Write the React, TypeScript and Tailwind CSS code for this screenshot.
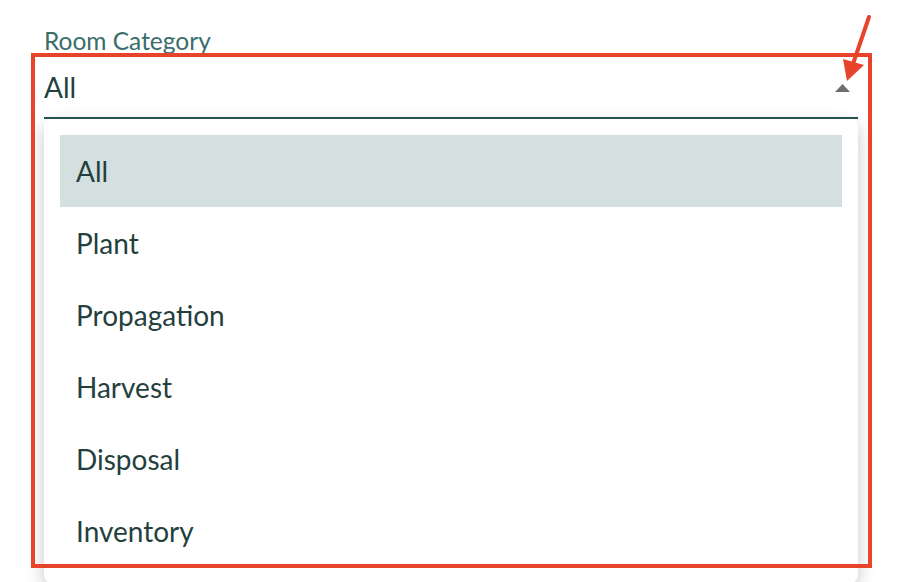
import React from 'react';

const options = ['All', 'Plant', 'Propagation', 'Harvest', 'Disposal', 'Inventory'];

export default function App() {
  const selected = 'All';

  return (
    <div className="relative w-[904px] h-[582px] overflow-hidden bg-white font-['Lato','Liberation_Sans',sans-serif]">
      <div className="ml-[44px] w-[814px] pt-[27px]">
        <label className="block h-[28px] text-[24.5px] leading-[28px] text-[#3a6e6b]">Room Category</label>

        {/* select field */}
        <div className="relative h-[64px] border-b-2 border-[#25524f] pt-[15px]">
          <span className="block text-[28px] leading-[34px] text-[#243f3e]">{selected}</span>
          <svg className="absolute right-[8px] top-[29px]" width="15" height="8" viewBox="0 0 15 8">
            <polygon points="7.5,0 15,8 0,8" fill="#6e6e6e" />
          </svg>
        </div>

        {/* open menu */}
        <div className="rounded-lg bg-white px-4 pt-4 pb-4 shadow-[0_6px_18px_rgba(0,0,0,0.22)]">
          {options.map((opt) => (
            <div
              key={opt}
              className={`h-[72px] pl-[16px] text-[28px] leading-[72px] text-[#243f3e] ${opt === selected ? 'bg-[#d4e0e0]' : ''}`}
            >
              {opt}
            </div>
          ))}
        </div>
      </div>

      {/* annotation */}
      <div className="absolute left-[31px] top-[53px] w-[841px] h-[515px] border-4 border-[#e8432b]" />
      <svg className="absolute left-0 top-0" width="904" height="582">
        <line x1="869" y1="17" x2="853" y2="64" stroke="#e8432b" strokeWidth="4" strokeLinecap="round" />
        <polygon points="843,59 864,65 847,81" fill="#e8432b" />
      </svg>
    </div>
  );
}
